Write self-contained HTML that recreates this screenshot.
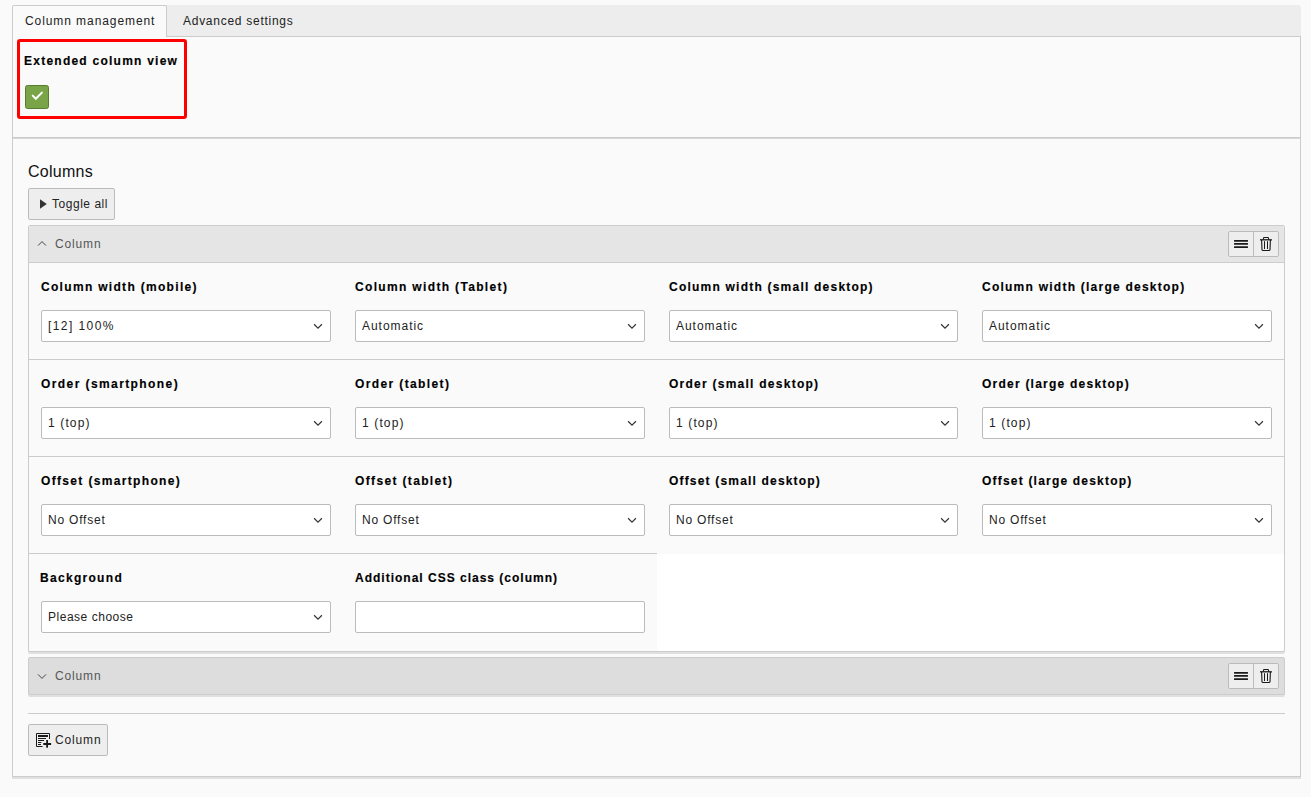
<!DOCTYPE html>
<html><head><meta charset="utf-8">
<style>
*{box-sizing:border-box;margin:0;padding:0}
html,body{width:1311px;height:797px;overflow:hidden;background:#fafafa;font-family:"Liberation Sans",sans-serif;font-size:12px;color:#222}
.a{position:absolute}
.t{position:absolute;white-space:nowrap;line-height:14px;font-size:12px}
.b{font-weight:bold;color:#000;-webkit-text-stroke:0.15px #000}
.sel{position:absolute;height:32px;background:#fff;border:1px solid #bbb;border-radius:2px}
.sel span{position:absolute;left:6px;top:8px;line-height:14px;white-space:nowrap;color:#222}
.sel svg{position:absolute;right:7px;top:12px}
.row{position:absolute;left:29px;height:97px;background:#fafafa;border-top:1px solid #ccc}
.btn{position:absolute;background:#eee;border:1px solid #bbb;border-radius:2px}
.grp{position:absolute;width:51px;height:26px;border:1px solid #bbb;border-radius:2px;background:#eee}
</style></head><body>

<!-- tab bar -->
<div class="a" style="left:12px;top:5px;width:1289px;height:32px;background:#ededed;border-radius:2px 2px 0 0;border-bottom:1px solid #ccc"></div>
<div class="a" style="left:12px;top:5px;width:155px;height:32px;background:#fafafa;border:1px solid #ccc;border-bottom:none;border-radius:2px 2px 0 0"></div>
<div class="t" style="left:25px;top:14px;letter-spacing:0.92px">Column management</div>
<div class="t" style="left:183px;top:14px;letter-spacing:0.73px">Advanced settings</div>

<!-- outer panel -->
<div class="a" style="left:12px;top:36px;width:1289px;height:741px;border:1px solid #ccc;border-top:none;box-shadow:0 2px 0 rgba(0,0,0,.1)"></div>
<div class="a" style="left:13px;top:137px;width:1287px;height:1px;background:#cbcbcb"></div>
<div class="a" style="left:13px;top:138px;width:1287px;height:1px;background:#d8d8d8"></div>

<!-- red highlight -->
<div class="a" style="left:17px;top:39px;width:170px;height:80px;border:3px solid #f00;border-radius:3px"></div>
<div class="t b" style="left:24px;top:54px;letter-spacing:1.24px">Extended column view</div>
<div class="a" style="left:25px;top:85px;width:24px;height:24px;background:#79a548;border:1px solid #587d30;border-radius:2.5px">
<svg width="22" height="22" style="position:absolute;left:0;top:0"><path d="M6.7 9.6 L9.8 12.8 L15.9 6.6" stroke="#fff" stroke-width="2" fill="none" stroke-linecap="round"/></svg>
</div>

<div class="t" style="left:28px;top:163px;font-size:16px;line-height:18px;letter-spacing:0.25px;color:#111">Columns</div>

<div class="btn" style="left:28px;top:188px;width:87px;height:32px"></div>
<svg class="a" style="left:39px;top:199px" width="9" height="10"><path d="M1 0.3 L7.8 5 L1 9.7Z" fill="#333"/></svg>
<div class="t" style="left:52px;top:197px;letter-spacing:0.53px">Toggle all</div>

<!-- column panel 1 -->
<div class="a" style="left:28px;top:225px;width:1257px;height:427px;background:#fff;border:1px solid #ccc;border-radius:2px;box-shadow:0 2px 0 rgba(0,0,0,.1)"></div>
<div class="a" style="left:29px;top:226px;width:1255px;height:37px;background:#e5e5e5;border-radius:2px 2px 0 0;border-bottom:1px solid #ccc"></div>
<svg class="a" style="left:37px;top:240px" width="10" height="7"><path d="M1 5.6 L5 1.6 L9 5.6" stroke="#444" stroke-width="1" fill="none"/></svg>
<div class="t" style="left:55px;top:237px;color:#555;letter-spacing:0.85px">Column</div>
<div class="grp" style="left:1228px;top:231px"></div>
<svg class="a" style="left:1228px;top:231px" width="51" height="26"><g fill="#1a1a1a"><rect x="6" y="9" width="14" height="1.8" rx=".5"/><rect x="6" y="12.1" width="14" height="1.7" rx=".5"/><rect x="6" y="15.2" width="14" height="1.8" rx=".5"/></g><rect x="25" y="1" width="1" height="24" fill="#bbb"/><g fill="none" stroke="#1a1a1a" stroke-width="1.1"><path d="M35.5 8.5 V7.2 Q35.5 6.5 36.2 6.5 H39.8 Q40.5 6.5 40.5 7.2 V8.5"/><path d="M32 8.8 H44" stroke-width="1.3"/><path d="M33.6 9 L34 18.6 Q34.1 19.5 35 19.5 H41 Q41.9 19.5 42 18.6 L42.4 9"/><path d="M36.5 10.2 V18 M39.5 10.2 V18" stroke-width="1"/></g></svg>

<div class="row" style="top:263px;width:1255px;border-top:none;height:96px"></div>
<div class="row" style="top:359px;width:1255px"></div>
<div class="row" style="top:456px;width:1255px;height:98px"></div>
<div class="row" style="top:553px;width:628px;height:98px"></div>

<!-- fields -->
<div class="t b" style="left:41px;top:280px;letter-spacing:1.31px">Column width (mobile)</div>
<div class="sel" style="left:41px;top:310px;width:290px"><span style="letter-spacing:1.43px">[12] 100%</span><svg width="10" height="7"><path d="M1.1 1.3 L5 5.1 L8.9 1.3" stroke="#333" stroke-width="1.2" fill="none"/></svg></div>
<div class="t b" style="left:355px;top:280px;letter-spacing:1.34px">Column width (Tablet)</div>
<div class="sel" style="left:355px;top:310px;width:290px"><span style="letter-spacing:0.97px">Automatic</span><svg width="10" height="7"><path d="M1.1 1.3 L5 5.1 L8.9 1.3" stroke="#333" stroke-width="1.2" fill="none"/></svg></div>
<div class="t b" style="left:669px;top:280px;letter-spacing:1.22px">Column width (small desktop)</div>
<div class="sel" style="left:669px;top:310px;width:289px"><span style="letter-spacing:0.97px">Automatic</span><svg width="10" height="7"><path d="M1.1 1.3 L5 5.1 L8.9 1.3" stroke="#333" stroke-width="1.2" fill="none"/></svg></div>
<div class="t b" style="left:982px;top:280px;letter-spacing:1.24px">Column width (large desktop)</div>
<div class="sel" style="left:982px;top:310px;width:290px"><span style="letter-spacing:0.97px">Automatic</span><svg width="10" height="7"><path d="M1.1 1.3 L5 5.1 L8.9 1.3" stroke="#333" stroke-width="1.2" fill="none"/></svg></div>
<div class="t b" style="left:41px;top:377px;letter-spacing:1.41px">Order (smartphone)</div>
<div class="sel" style="left:41px;top:407px;width:290px"><span style="letter-spacing:1.13px">1 (top)</span><svg width="10" height="7"><path d="M1.1 1.3 L5 5.1 L8.9 1.3" stroke="#333" stroke-width="1.2" fill="none"/></svg></div>
<div class="t b" style="left:355px;top:377px;letter-spacing:1.38px">Order (tablet)</div>
<div class="sel" style="left:355px;top:407px;width:290px"><span style="letter-spacing:1.13px">1 (top)</span><svg width="10" height="7"><path d="M1.1 1.3 L5 5.1 L8.9 1.3" stroke="#333" stroke-width="1.2" fill="none"/></svg></div>
<div class="t b" style="left:669px;top:377px;letter-spacing:1.25px">Order (small desktop)</div>
<div class="sel" style="left:669px;top:407px;width:289px"><span style="letter-spacing:1.13px">1 (top)</span><svg width="10" height="7"><path d="M1.1 1.3 L5 5.1 L8.9 1.3" stroke="#333" stroke-width="1.2" fill="none"/></svg></div>
<div class="t b" style="left:982px;top:377px;letter-spacing:1.23px">Order (large desktop)</div>
<div class="sel" style="left:982px;top:407px;width:290px"><span style="letter-spacing:1.13px">1 (top)</span><svg width="10" height="7"><path d="M1.1 1.3 L5 5.1 L8.9 1.3" stroke="#333" stroke-width="1.2" fill="none"/></svg></div>
<div class="t b" style="left:41px;top:474px;letter-spacing:1.34px">Offset (smartphone)</div>
<div class="sel" style="left:41px;top:504px;width:290px"><span style="letter-spacing:0.8px">No Offset</span><svg width="10" height="7"><path d="M1.1 1.3 L5 5.1 L8.9 1.3" stroke="#333" stroke-width="1.2" fill="none"/></svg></div>
<div class="t b" style="left:355px;top:474px;letter-spacing:1.35px">Offset (tablet)</div>
<div class="sel" style="left:355px;top:504px;width:290px"><span style="letter-spacing:0.8px">No Offset</span><svg width="10" height="7"><path d="M1.1 1.3 L5 5.1 L8.9 1.3" stroke="#333" stroke-width="1.2" fill="none"/></svg></div>
<div class="t b" style="left:669px;top:474px;letter-spacing:1.18px">Offset (small desktop)</div>
<div class="sel" style="left:669px;top:504px;width:289px"><span style="letter-spacing:0.8px">No Offset</span><svg width="10" height="7"><path d="M1.1 1.3 L5 5.1 L8.9 1.3" stroke="#333" stroke-width="1.2" fill="none"/></svg></div>
<div class="t b" style="left:982px;top:474px;letter-spacing:1.2px">Offset (large desktop)</div>
<div class="sel" style="left:982px;top:504px;width:290px"><span style="letter-spacing:0.8px">No Offset</span><svg width="10" height="7"><path d="M1.1 1.3 L5 5.1 L8.9 1.3" stroke="#333" stroke-width="1.2" fill="none"/></svg></div>
<div class="t b" style="left:40px;top:571px;letter-spacing:1.3px">Background</div>
<div class="sel" style="left:41px;top:601px;width:290px"><span style="letter-spacing:0.52px">Please choose</span><svg width="10" height="7"><path d="M1.1 1.3 L5 5.1 L8.9 1.3" stroke="#333" stroke-width="1.2" fill="none"/></svg></div>
<div class="t b" style="left:355px;top:571px;letter-spacing:1.0px">Additional CSS class (column)</div>
<div class="sel" style="left:355px;top:601px;width:290px"></div>

<!-- column panel 2 -->
<div class="a" style="left:28px;top:657px;width:1257px;height:38px;background:#ddd;border:1px solid #ccc;border-radius:2px;box-shadow:0 2px 0 rgba(0,0,0,.1)"></div>
<svg class="a" style="left:37px;top:673px" width="10" height="7"><path d="M1 1.4 L5 5.4 L9 1.4" stroke="#444" stroke-width="1" fill="none"/></svg>
<div class="t" style="left:55px;top:669px;color:#555;letter-spacing:0.85px">Column</div>
<div class="grp" style="left:1228px;top:663px"></div>
<svg class="a" style="left:1228px;top:663px" width="51" height="26"><g fill="#1a1a1a"><rect x="6" y="9" width="14" height="1.8" rx=".5"/><rect x="6" y="12.1" width="14" height="1.7" rx=".5"/><rect x="6" y="15.2" width="14" height="1.8" rx=".5"/></g><rect x="25" y="1" width="1" height="24" fill="#bbb"/><g fill="none" stroke="#1a1a1a" stroke-width="1.1"><path d="M35.5 8.5 V7.2 Q35.5 6.5 36.2 6.5 H39.8 Q40.5 6.5 40.5 7.2 V8.5"/><path d="M32 8.8 H44" stroke-width="1.3"/><path d="M33.6 9 L34 18.6 Q34.1 19.5 35 19.5 H41 Q41.9 19.5 42 18.6 L42.4 9"/><path d="M36.5 10.2 V18 M39.5 10.2 V18" stroke-width="1"/></g></svg>

<div class="a" style="left:28px;top:713px;width:1257px;height:1px;background:#ccc"></div>

<div class="btn" style="left:28px;top:724px;width:80px;height:32px"></div>
<svg class="a" style="left:35px;top:732px" width="17" height="17"><path d="M14.5 7 V1.5 H1.5 V14.5 H7.5" stroke="#1a1a1a" stroke-width="1" fill="none"/><g fill="#1a1a1a"><rect x="3" y="3" width="10" height="2"/><rect x="3" y="6" width="8" height="1"/><rect x="3" y="8" width="6" height="1"/><rect x="3" y="10" width="3.3" height="1"/><rect x="3" y="12" width="3" height="1"/><rect x="8.3" y="11" width="7.8" height="2"/><rect x="11.2" y="8" width="1.8" height="7.7"/></g></svg>
<div class="t" style="left:55px;top:733px;letter-spacing:0.85px">Column</div>

</body></html>
